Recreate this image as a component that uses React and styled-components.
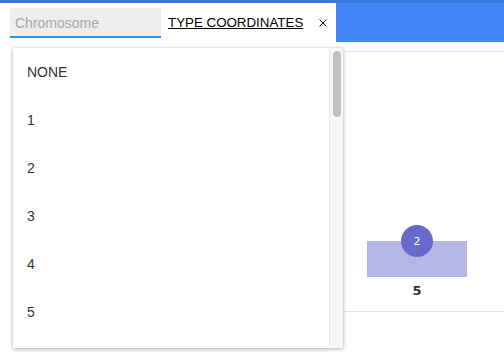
import React from "react";
import styled, { createGlobalStyle } from "styled-components";

const Global = createGlobalStyle`
  html, body { margin: 0; padding: 0; background: #fff; }
  body { font-family: "Liberation Sans", Arial, sans-serif; width: 504px; height: 358px; overflow: hidden; }
`;

const Page = styled.div`
  position: relative;
  width: 504px;
  height: 358px;
  background: #fff;
`;

const Header = styled.div`
  display: flex;
  height: 39px;
  background: #4285f4;
  border-top: 3px solid #3a74dc;
`;

const SearchPanel = styled.div`
  display: flex;
  align-items: center;
  width: 326px;
  padding-left: 10px;
  background: #fff;
`;

const Input = styled.input`
  box-sizing: border-box;
  width: 151px;
  height: 30px;
  padding: 2px 0 0 5px;
  border: none;
  border-bottom: 2px solid #2196f3;
  background: #eeeeee;
  font-family: "Liberation Sans", Arial, sans-serif;
  font-size: 14px;
  color: #333;
  outline: none;
  caret-color: #000;
  &::placeholder { color: #a9a9a9; }
`;

const LinkButton = styled.button`
  margin-left: 7px;
  padding: 0;
  border: none;
  background: none;
  font-family: "Liberation Sans", Arial, sans-serif;
  font-size: 13.33px;
  color: #000;
  text-decoration: underline;
  cursor: pointer;
`;

const Close = styled.button`
  display: flex;
  margin-left: 16px;
  margin-top: 1px;
  padding: 0;
  border: none;
  background: none;
`;

const Body = styled.div`
  display: flex;
  justify-content: flex-end;
  padding-top: 9px;
`;

const ChartPanel = styled.div`
  box-sizing: border-box;
  width: 160px;
  height: 261px;
  border-top: 1px solid #e2e2e2;
  border-bottom: 1px solid #e2e2e2;
  display: flex;
  align-items: flex-end;
  padding: 0 0 12px 23px;
`;

const BarColumn = styled.div`
  display: flex;
  flex-direction: column;
  align-items: center;
  width: 100px;
`;

const Bar = styled.div`
  position: relative;
  width: 100px;
  height: ${(p) => p.$h}px;
  background: #b5b5e6;
`;

const Badge = styled.div`
  position: absolute;
  left: 50%;
  top: -16px;
  width: 32px;
  height: 32px;
  margin-left: -16px;
  border-radius: 50%;
  background: #6769cd;
  color: #fff;
  font-family: "DejaVu Sans", sans-serif;
  font-size: 11px;
  display: flex;
  align-items: center;
  justify-content: center;
`;

const BarLabel = styled.div`
  margin-top: 6px;
  font-family: "DejaVu Sans", sans-serif;
  font-weight: bold;
  font-size: 13px;
  color: #333;
  line-height: 16px;
`;

const Menu = styled.div`
  position: absolute;
  left: 13px;
  top: 48px;
  width: 330px;
  height: 300px;
  background: #fff;
  box-shadow: 0 1px 4px rgba(0, 0, 0, 0.3), 0 0 1px rgba(0, 0, 0, 0.15);
  display: flex;
  overflow: hidden;
`;

const List = styled.ul`
  flex: 1;
  margin: 0;
  padding: 0;
  list-style: none;
`;

const Item = styled.li`
  height: 48px;
  display: flex;
  align-items: center;
  padding-left: 14px;
  font-family: "Liberation Sans", Arial, sans-serif;
  font-size: 14px;
  color: #333;
`;

const Track = styled.div`
  width: 14px;
  background: #f7f7f7;
  border-left: 1px solid #e8e8e8;
  padding: 3px 0 0 3px;
  box-sizing: border-box;
`;

const Thumb = styled.div`
  width: 8px;
  height: 66px;
  border-radius: 4px;
  background: #c1c1c1;
`;

const items = ["NONE", "1", "2", "3", "4", "5"];

export default function App() {
  return (
    <Page>
      <Global />
      <Header>
        <SearchPanel>
          <Input placeholder="Chromosome" autoFocus />
          <LinkButton>TYPE COORDINATES</LinkButton>
          <Close aria-label="close">
            <svg width="8" height="8" viewBox="0 0 8 8">
              <path d="M0.5 0.5 L7.5 7.5 M7.5 0.5 L0.5 7.5" stroke="#111" strokeWidth="1" fill="none" />
            </svg>
          </Close>
        </SearchPanel>
      </Header>
      <Body>
        <ChartPanel>
          <BarColumn>
            <Bar $h={36}>
              <Badge>2</Badge>
            </Bar>
            <BarLabel>5</BarLabel>
          </BarColumn>
        </ChartPanel>
      </Body>
      <Menu>
        <List>
          {items.map((t) => (
            <Item key={t}>{t}</Item>
          ))}
        </List>
        <Track>
          <Thumb />
        </Track>
      </Menu>
    </Page>
  );
}
